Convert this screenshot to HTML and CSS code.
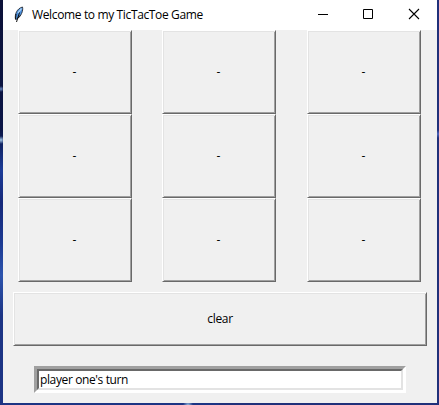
FILE: index.html
```
<!DOCTYPE html>
<html lang="en">
<head>
<meta charset="utf-8">
<title>Welcome to my TicTacToe Game</title>
<link rel="stylesheet" href="styles.css">
</head>
<body>
<main class="window">
  <header class="titlebar">
    <svg class="feather" width="16" height="18" viewBox="0 0 16 18">
      <path d="M4.500 14.500C3.500 9 6 3.500 11.500 2C12.500 5.500 10 11.500 6 14Z" fill="#4b8fdc" stroke="#333c48"/>
      <path d="M10.500 3.500L7 8" stroke="#a9d0f5" stroke-width="1.300"/>
      <path d="M5 9L4.500 14M6 14L9 10.500" stroke="#111"/>
      <path d="M8.500 7.500L5.500 17" stroke="#111"/>
    </svg>
    <h1 class="title">Welcome to my TicTacToe Game</h1>
    <div class="controls">
      <svg width="45" height="30" viewBox="0 0 45 30"><path d="M18 14.500H28" stroke="#000"/></svg>
      <svg width="46" height="30" viewBox="0 0 46 30"><path d="M18.500 9.500H27.500V18.500H18.500Z" stroke="#000" fill="none"/></svg>
      <svg width="46" height="30" viewBox="0 0 46 30"><path d="M18 9L28 19M28 9L18 19" stroke="#000" stroke-width="1.100"/></svg>
    </div>
  </header>
  <section class="board">
    <button class="button">-</button><button class="button">-</button><button class="button">-</button>
    <button class="button">-</button><button class="button">-</button><button class="button">-</button>
    <button class="button">-</button><button class="button">-</button><button class="button">-</button>
  </section>
  <button class="button clear">clear</button>
  <div class="entry"><div class="entry-text">player one's turn</div></div>
</main>
</body>
</html>
```
FILE: styles.css
```
* { box-sizing: border-box; }
html, body { margin: 0; height: 100%; }
body {
  padding: 0 2px 2px 3px;
  overflow: hidden;
  background:
    radial-gradient(circle at 1px 89px, #6b8bc0 0, transparent 3px),
    radial-gradient(circle at 1px 140px, #a4c8e8 0, transparent 4px),
    radial-gradient(circle at 438px 134px, #5068c0 0, transparent 4px),
    radial-gradient(circle at 188px 405px, #8fb4dc 0, transparent 5px),
    linear-gradient(90deg, transparent 50%, #20307a 50%),
    linear-gradient(#0c1238 0, #0b1546 32%, #1c3c98 42%, #16297a 50%, #1c3a92 60%, #2d54ad 68%, #1c3484 78%, #1c3484 100%);
  font: 12px/16px "Open Sans", "Noto Sans", sans-serif;
  color: #000;
}
.window { display: flex; flex-direction: column; height: 403px; background: #f0f0f0; }
.titlebar { display: flex; align-items: center; height: 30px; flex: none; background: #fff; }
.feather { margin: -2px 5px 0 8px; fill: none; }
.title { margin: 0; font-size: 12px; line-height: 16px; font-weight: 400; letter-spacing: -.36px; white-space: nowrap; }
.controls { display: flex; margin-left: auto; }
.board {
  display: grid;
  grid-template-columns: 114px 114px 114px;
  grid-auto-rows: 84px;
  column-gap: 30px;
  margin-left: 15px;
}
.board .button { padding-right: 1px; }
.board .button:nth-child(3n) { margin-left: 1px; margin-right: -1px; }
.button {
  padding: 0;
  border: 1px solid;
  border-color: #fff #696969 #696969 #fff;
  box-shadow: inset 1px 1px #e3e3e3, inset -1px -1px #a0a0a0;
  background: #f0f0f0;
  font: inherit;
  color: inherit;
}
.clear { height: 54px; flex: none; margin: 10px 10px 0; letter-spacing: -.3px; }
.entry {
  width: 372px;
  height: 27px;
  margin: 20px 0 0 31px;
  border: 3px solid;
  border-color: #a0a0a0 #fff #fff #a0a0a0;
}
.entry-text {
  height: 21px;
  padding-left: 1px;
  border: 2px solid;
  border-color: #696969 #e3e3e3 #e3e3e3 #696969;
  background: #fff;
  line-height: 17px;
  letter-spacing: -.38px;
}
```
